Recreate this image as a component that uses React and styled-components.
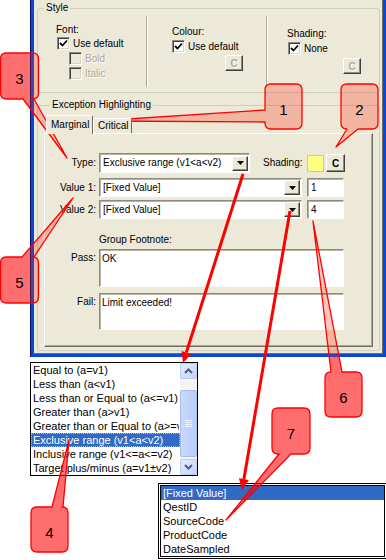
import React from "react";
import styled, { createGlobalStyle } from "styled-components";

const GlobalStyle = createGlobalStyle`
  html, body { margin: 0; padding: 0; background: #fff; }
  body { font-family: "Liberation Sans", Arial, sans-serif; }
`;

const Stage = styled.div`
  position: relative;
  width: 386px;
  height: 560px;
  overflow: hidden;
  background: #fff;
`;

const Window = styled.div`
  margin-left: 30px;
  width: 356px;
  height: 357px;
  box-sizing: border-box;
  border-left: 1px solid #00106a;
  background: #0a46d8;
  padding: 0 3px 3px 3px;
`;

const Client = styled.div`
  height: 100%;
  box-sizing: border-box;
  background: #ece9d8;
  border-right: 1px solid #6f6d62;
  border-bottom: 1px solid #6f6d62;
  padding: 2px 2px 0 3px;
  font: 10px "Liberation Sans", Arial, sans-serif;
  color: #000;
  display: flex;
  flex-direction: column;
`;

const Group = styled.fieldset`
  margin: ${(p) => p.$mt || 0}px 0 0 0;
  padding: ${(p) => p.$pad};
  border: 1px solid #d0d0bf;
  border-radius: 3px;
  min-width: 0;
`;

const Legend = styled.legend`
  margin-left: 6px;
  padding: 0 2px;
  font-size: 10px;
  line-height: 12px;
`;

const Columns = styled.div`
  display: flex;
  height: 71px;
`;

const Col = styled.div`
  box-sizing: border-box;
  width: ${(p) => (p.$w ? `${p.$w}px` : "auto")};
  flex: ${(p) => (p.$w ? "none" : 1)};
  padding: ${(p) => p.$pt}px 0 0 ${(p) => p.$pl}px;
  border-left: ${(p) => (p.$first ? "none" : "1px solid #fff")};
  border-right: ${(p) => (p.$last ? "none" : "1px solid #aca899")};
  display: flex;
  flex-direction: column;
  align-items: flex-start;
`;

const Text = styled.div`
  line-height: 12px;
  white-space: nowrap;
  color: ${(p) => (p.$disabled ? "#aca899" : "#000")};
  text-shadow: ${(p) => (p.$disabled ? "1px 1px 0 #fff" : "none")};
`;

const CheckRow = styled.div`
  display: flex;
  align-items: center;
  gap: 3px;
  height: 13px;
  margin: ${(p) => p.$mt || 0}px 0 0 ${(p) => p.$ml || 0}px;
`;

const Box = styled.span`
  box-sizing: border-box;
  width: 13px;
  height: 13px;
  flex: none;
  border: 1px solid;
  border-color: #8d8b7f #fff #fff #8d8b7f;
  box-shadow: inset 1px 1px 0 #404040, inset -1px -1px 0 #d8d5c6;
  background: ${(p) => (p.$disabled ? "#ece9d8" : "#fff")};
  display: flex;
  align-items: center;
  justify-content: center;
`;

const Btn = styled.div`
  box-sizing: border-box;
  width: ${(p) => p.$w}px;
  height: ${(p) => p.$h}px;
  margin: ${(p) => p.$mt || 0}px 0 0 ${(p) => p.$ml || 0}px;
  flex: none;
  background: #ece9d8;
  border: 1px solid;
  border-color: #fff #404040 #404040 #fff;
  box-shadow: inset -1px -1px 0 #8d8b7f;
  display: flex;
  align-items: center;
  justify-content: center;
  font-weight: bold;
  font-size: 10px;
  color: ${(p) => (p.$disabled ? "#aca899" : "#000")};
  text-shadow: ${(p) => (p.$disabled ? "1px 1px 0 #fff" : "none")};
`;

const Tabs = styled.div`
  display: flex;
  align-items: flex-end;
  height: 19px;
  padding-left: 2px;
  margin-bottom: -1px;
  position: relative;
  z-index: 1;
`;

const Tab = styled.div`
  box-sizing: border-box;
  width: ${(p) => p.$w}px;
  height: ${(p) => (p.$active ? 19 : 15)}px;
  margin-bottom: ${(p) => (p.$active ? 0 : 1)}px;
  background: #ece9d8;
  border: 1px solid;
  border-color: #fff #6f6d62 transparent #fff;
  border-bottom: none;
  border-radius: 2px 2px 0 0;
  padding: ${(p) => (p.$active ? 3 : 1)}px 0 0 4px;
  line-height: 12px;
`;

const Panel = styled.div`
  box-sizing: border-box;
  height: 214px;
  border: 1px solid;
  border-color: #fff #6f6d62 #6f6d62 #fff;
  box-shadow: inset -1px -1px 0 #aca899;
  padding: 19px 0 0 0;
  display: flex;
  flex-direction: column;
`;

const Row = styled.div`
  display: flex;
  align-items: ${(p) => (p.$top ? "flex-start" : "center")};
  height: ${(p) => p.$h}px;
  margin-top: ${(p) => p.$mt || 0}px;
`;

const Label = styled.div`
  width: 51px;
  flex: none;
  margin-right: 3px;
  text-align: right;
  line-height: 12px;
  padding-top: ${(p) => (p.$top ? 3 : 0)}px;
`;

const Field = styled.div`
  box-sizing: border-box;
  width: ${(p) => p.$w}px;
  height: ${(p) => p.$h}px;
  margin-right: ${(p) => p.$mr || 0}px;
  flex: none;
  background: #fff;
  border: 1px solid;
  border-color: #8d8b7f #fff #fff #8d8b7f;
  box-shadow: inset 1px 1px 0 #b6b3a4;
  display: flex;
  align-items: ${(p) => (p.$top ? "flex-start" : "center")};
  padding: ${(p) => (p.$top ? "3px 0 0 2px" : "0 1px 0 3px")};
  line-height: 12px;
  white-space: nowrap;
  overflow: hidden;
`;

const FieldText = styled.span`
  flex: 1;
  overflow: hidden;
`;

const DropBtn = styled.span`
  box-sizing: border-box;
  width: 16px;
  height: 15px;
  flex: none;
  background: #ece9d8;
  border: 1px solid;
  border-color: #fff #404040 #404040 #fff;
  box-shadow: inset -1px -1px 0 #8d8b7f;
  display: flex;
  align-items: center;
  justify-content: center;
`;

const SideLabel = styled.div`
  width: 44px;
  margin-left: 13px;
  flex: none;
  line-height: 12px;
`;

const Swatch = styled.div`
  box-sizing: border-box;
  width: 17px;
  height: 17px;
  margin-right: 2px;
  background: #ffff80;
  border: 1px solid #c8c5b5;
`;

const Caption = styled.div`
  margin: 15px 0 0 54px;
  line-height: 12px;
`;

const PopList = styled.div`
  box-sizing: border-box;
  margin: ${(p) => p.$mt}px 0 0 ${(p) => p.$ml}px;
  width: ${(p) => p.$w}px;
  height: ${(p) => p.$h}px;
  border: 1px solid #000;
  background: #fff;
  display: flex;
  padding: ${(p) => (p.$double ? 1 : 0)}px;
  font: 11px "Liberation Sans", Arial, sans-serif;
`;

const Inner = styled.div`
  flex: 1;
  display: flex;
  border: ${(p) => (p.$double ? "1px solid #000" : "none")};
  min-width: 0;
`;

const Items = styled.div`
  flex: 1;
  min-width: 0;
  overflow: hidden;
`;

const Item = styled.div`
  box-sizing: border-box;
  height: 14px;
  line-height: 12px;
  padding-left: 1px;
  border: 1px ${(p) => (p.$focus ? "dotted #e6b84e" : "solid transparent")};
  white-space: nowrap;
  overflow: hidden;
  background: ${(p) => (p.$sel ? "#316ac5" : "transparent")};
  color: ${(p) => (p.$sel ? "#fff" : "#000")};
`;

const Scroll = styled.div`
  width: 17px;
  flex: none;
  display: flex;
  flex-direction: column;
  background: #f4f3ee;
`;

const ScrollBtn = styled.div`
  box-sizing: border-box;
  height: 16px;
  border: 1px solid #bccbf0;
  border-radius: 2px;
  background: linear-gradient(135deg, #e5edfd, #c3d4fb);
  display: flex;
  align-items: center;
  justify-content: center;
`;

const Track = styled.div`
  flex: 1;
  padding-top: 11px;
`;

const Thumb = styled.div`
  box-sizing: border-box;
  height: 67px;
  border: 1px solid #a8bdea;
  border-radius: 2px;
  background: linear-gradient(90deg, #cad9fc, #b9cdfa);
  display: flex;
  align-items: center;
  justify-content: center;
`;

const Overlay = styled.svg`
  position: absolute;
  left: 0;
  top: 0;
  pointer-events: none;
`;

const Check = () => (
  <svg width="9" height="9" viewBox="0 0 9 9">
    <polyline points="1,4 3.5,6.5 8,1.5" fill="none" stroke="#000" strokeWidth="1.8" />
  </svg>
);

const Tri = () => (
  <svg width="7" height="4" viewBox="0 0 7 4">
    <polygon points="0,0 7,0 3.5,4" fill="#000" />
  </svg>
);

const Chevron = ({ down }) => (
  <svg width="9" height="6" viewBox="0 0 9 6">
    <polyline
      points={down ? "1,1 4.5,4.5 8,1" : "1,5 4.5,1.5 8,5"}
      fill="none"
      stroke="#4d6185"
      strokeWidth="2"
    />
  </svg>
);

const Grip = () => (
  <svg width="7" height="8" viewBox="0 0 7 8">
    {[0.5, 2.5, 4.5, 6.5].map((y) => (
      <line key={y} x1="0" y1={y} x2="7" y2={y} stroke="#eef3fe" strokeWidth="1" />
    ))}
  </svg>
);

const CheckBox = ({ checked, disabled, label, mt, ml }) => (
  <CheckRow $mt={mt} $ml={ml}>
    <Box $disabled={disabled}>{checked && <Check />}</Box>
    <Text $disabled={disabled}>{label}</Text>
  </CheckRow>
);

const Combo = ({ w, h, text }) => (
  <Field $w={w} $h={h}>
    <FieldText>{text}</FieldText>
    <DropBtn>
      <Tri />
    </DropBtn>
  </Field>
);

const ruleItems = [
  "Equal to (a=v1)",
  "Less than (a<v1)",
  "Less than or Equal to (a<=v1)",
  "Greater than (a>v1)",
  "Greater than or Equal to (a>=v1)",
  "Exclusive range (v1<a<v2)",
  "Inclusive range (v1<=a<=v2)",
  "Target plus/minus (a=v1\u00b1v2)",
];

const sourceItems = ["[Fixed Value]", "QestID", "SourceCode", "ProductCode", "DateSampled"];

const callouts = [
  { n: "1", x: 265, y: 84, w: 37, h: 45, side: "left", a: 110, b: 122, tip: [97, 121] },
  { n: "2", x: 341, y: 84, w: 37, h: 45, side: "bottom", a: 347, b: 358, tip: [336, 147] },
  { n: "3", x: 0.5, y: 53, w: 38, h: 46, side: "bottom", a: 23, b: 34, tip: [67, 158] },
  { n: "5", x: 0.5, y: 257, w: 38, h: 46, side: "top", a: 22, b: 34, tip: [73, 198] },
  { n: "6", x: 325, y: 372, w: 37, h: 45, side: "top", a: 331, b: 342, tip: [313, 221] },
  { n: "7", x: 272, y: 408, w: 38, h: 46, side: "bottom", a: 279, b: 291, tip: [226, 520] },
  { n: "4", x: 31, y: 507, w: 37, h: 45, side: "top", a: 52, b: 63, tip: [69, 440] },
];

function calloutPath({ x, y, w, h, side, a, b, tip }) {
  const r = 6;
  const [tx, ty] = tip;
  const R = x + w;
  const B = y + h;
  let d = `M${x + r},${y}`;
  if (side === "top") d += ` L${a},${y} L${tx},${ty} L${b},${y}`;
  d += ` L${R - r},${y} Q${R},${y} ${R},${y + r}`;
  if (side === "right") d += ` L${R},${a} L${tx},${ty} L${R},${b}`;
  d += ` L${R},${B - r} Q${R},${B} ${R - r},${B}`;
  if (side === "bottom") d += ` L${b},${B} L${tx},${ty} L${a},${B}`;
  d += ` L${x + r},${B} Q${x},${B} ${x},${B - r}`;
  if (side === "left") d += ` L${x},${b} L${tx},${ty} L${x},${a}`;
  d += ` L${x},${y + r} Q${x},${y} ${x + r},${y} Z`;
  return d;
}

function arrow([x1, y1], [x2, y2]) {
  const dx = x2 - x1;
  const dy = y2 - y1;
  const len = Math.hypot(dx, dy);
  const ux = dx / len;
  const uy = dy / len;
  const bx = x2 - ux * 11;
  const by = y2 - uy * 11;
  const px = -uy * 5;
  const py = ux * 5;
  return {
    line: [x1, y1, bx, by],
    head: `${x2},${y2} ${bx + px},${by + py} ${bx - px},${by - py}`,
  };
}

const arrows = [arrow([243, 174], [183, 363]), arrow([290, 211], [242, 490])];

const Annotations = () => (
  <Overlay width="386" height="560" viewBox="0 0 386 560">
    <defs>
      <mask id="outsideWin">
        <rect width="386" height="560" fill="#fff" />
        <rect x="30" y="0" width="356" height="357" fill="#000" />
      </mask>
      <mask id="insideWin">
        <rect x="30" y="0" width="356" height="357" fill="#fff" />
      </mask>
    </defs>
    {callouts.map((c) => {
      const d = calloutPath(c);
      return (
        <g key={c.n}>
          <path d={d} fill="rgba(255,0,0,0.57)" mask="url(#outsideWin)" />
          <path d={d} fill="rgba(255,40,20,0.27)" mask="url(#insideWin)" />
          <path d={d} fill="none" stroke="#ff0000" strokeWidth="1.3" strokeLinejoin="round" />
          <text
            x={c.x + c.w / 2}
            y={c.y + c.h / 2 + 8}
            textAnchor="middle"
            fontFamily="'Liberation Sans', Arial, sans-serif"
            fontSize="15"
            fill="#000"
          >
            {c.n}
          </text>
        </g>
      );
    })}
    {arrows.map((a, i) => (
      <g key={i}>
        <line x1={a.line[0]} y1={a.line[1]} x2={a.line[2]} y2={a.line[3]} stroke="#ff0000" strokeWidth="3" />
        <polygon points={a.head} fill="#ff0000" />
      </g>
    ))}
  </Overlay>
);

export default function App() {
  return (
    <Stage>
      <GlobalStyle />
      <Window>
        <Client>
          <Group $pad="2px 0 5px 0">
            <Legend>Style</Legend>
            <Columns>
              <Col $w={109} $first $pt={8} $pl={18}>
                <Text>Font:</Text>
                <CheckBox checked label="Use default" mt={1} ml={1} />
                <CheckBox disabled label="Bold" mt={2} ml={13} />
                <CheckBox disabled label="Italic" mt={2} ml={13} />
              </Col>
              <Col $w={120} $pt={10} $pl={24}>
                <Text>Colour:</Text>
                <CheckBox checked label="Use default" mt={2} />
                <Btn $w={18} $h={16} $mt={2} $ml={53} $disabled>
                  C
                </Btn>
              </Col>
              <Col $last $pt={12} $pl={19}>
                <Text>Shading:</Text>
                <CheckBox checked label="None" mt={2} ml={1} />
                <Btn $w={18} $h={16} $mt={3} $ml={56} $disabled>
                  C
                </Btn>
              </Col>
            </Columns>
          </Group>

          <Group $mt={6} $pad="4px 6px 3px 6px">
            <Legend>Exception Highlighting</Legend>
            <Tabs>
              <Tab $w={47} $active>
                Marginal
              </Tab>
              <Tab $w={39}>Critical</Tab>
            </Tabs>
            <Panel>
              <Row $h={20}>
                <Label>Type:</Label>
                <Combo w={151} h={20} text="Exclusive range (v1<a<v2)" />
                <SideLabel>Shading:</SideLabel>
                <Swatch />
                <Btn $w={19} $h={18}>
                  C
                </Btn>
              </Row>
              <Row $h={19} $mt={5}>
                <Label>Value 1:</Label>
                <Field $w={203} $h={19} $mr={5}>
                  <FieldText>[Fixed Value]</FieldText>
                  <DropBtn>
                    <Tri />
                  </DropBtn>
                </Field>
                <Field $w={37} $h={19}>
                  1
                </Field>
              </Row>
              <Row $h={19} $mt={3}>
                <Label>Value 2:</Label>
                <Field $w={203} $h={19} $mr={5}>
                  <FieldText>[Fixed Value]</FieldText>
                  <DropBtn>
                    <Tri />
                  </DropBtn>
                </Field>
                <Field $w={37} $h={19}>
                  4
                </Field>
              </Row>
              <Caption>Group Footnote:</Caption>
              <Row $h={38} $mt={3} $top>
                <Label $top>Pass:</Label>
                <Field $w={245} $h={38} $top>
                  OK
                </Field>
              </Row>
              <Row $h={37} $mt={6} $top>
                <Label $top>Fail:</Label>
                <Field $w={245} $h={37} $top>
                  Limit exceeded!
                </Field>
              </Row>
            </Panel>
          </Group>
        </Client>
      </Window>

      <PopList $mt={5} $ml={30} $w={168} $h={114}>
        <Inner>
          <Items>
            {ruleItems.map((t, i) => (
              <Item key={t} $sel={i === 5} $focus={i === 5}>
                {t}
              </Item>
            ))}
          </Items>
          <Scroll>
            <ScrollBtn>
              <Chevron />
            </ScrollBtn>
            <Track>
              <Thumb>
                <Grip />
              </Thumb>
            </Track>
            <ScrollBtn>
              <Chevron down />
            </ScrollBtn>
          </Scroll>
        </Inner>
      </PopList>

      <PopList $mt={7} $ml={158} $w={229} $h={76} $double>
        <Inner $double>
          <Items>
            {sourceItems.map((t, i) => (
              <Item key={t} $sel={i === 0}>
                {t}
              </Item>
            ))}
          </Items>
        </Inner>
      </PopList>

      <Annotations />
    </Stage>
  );
}
